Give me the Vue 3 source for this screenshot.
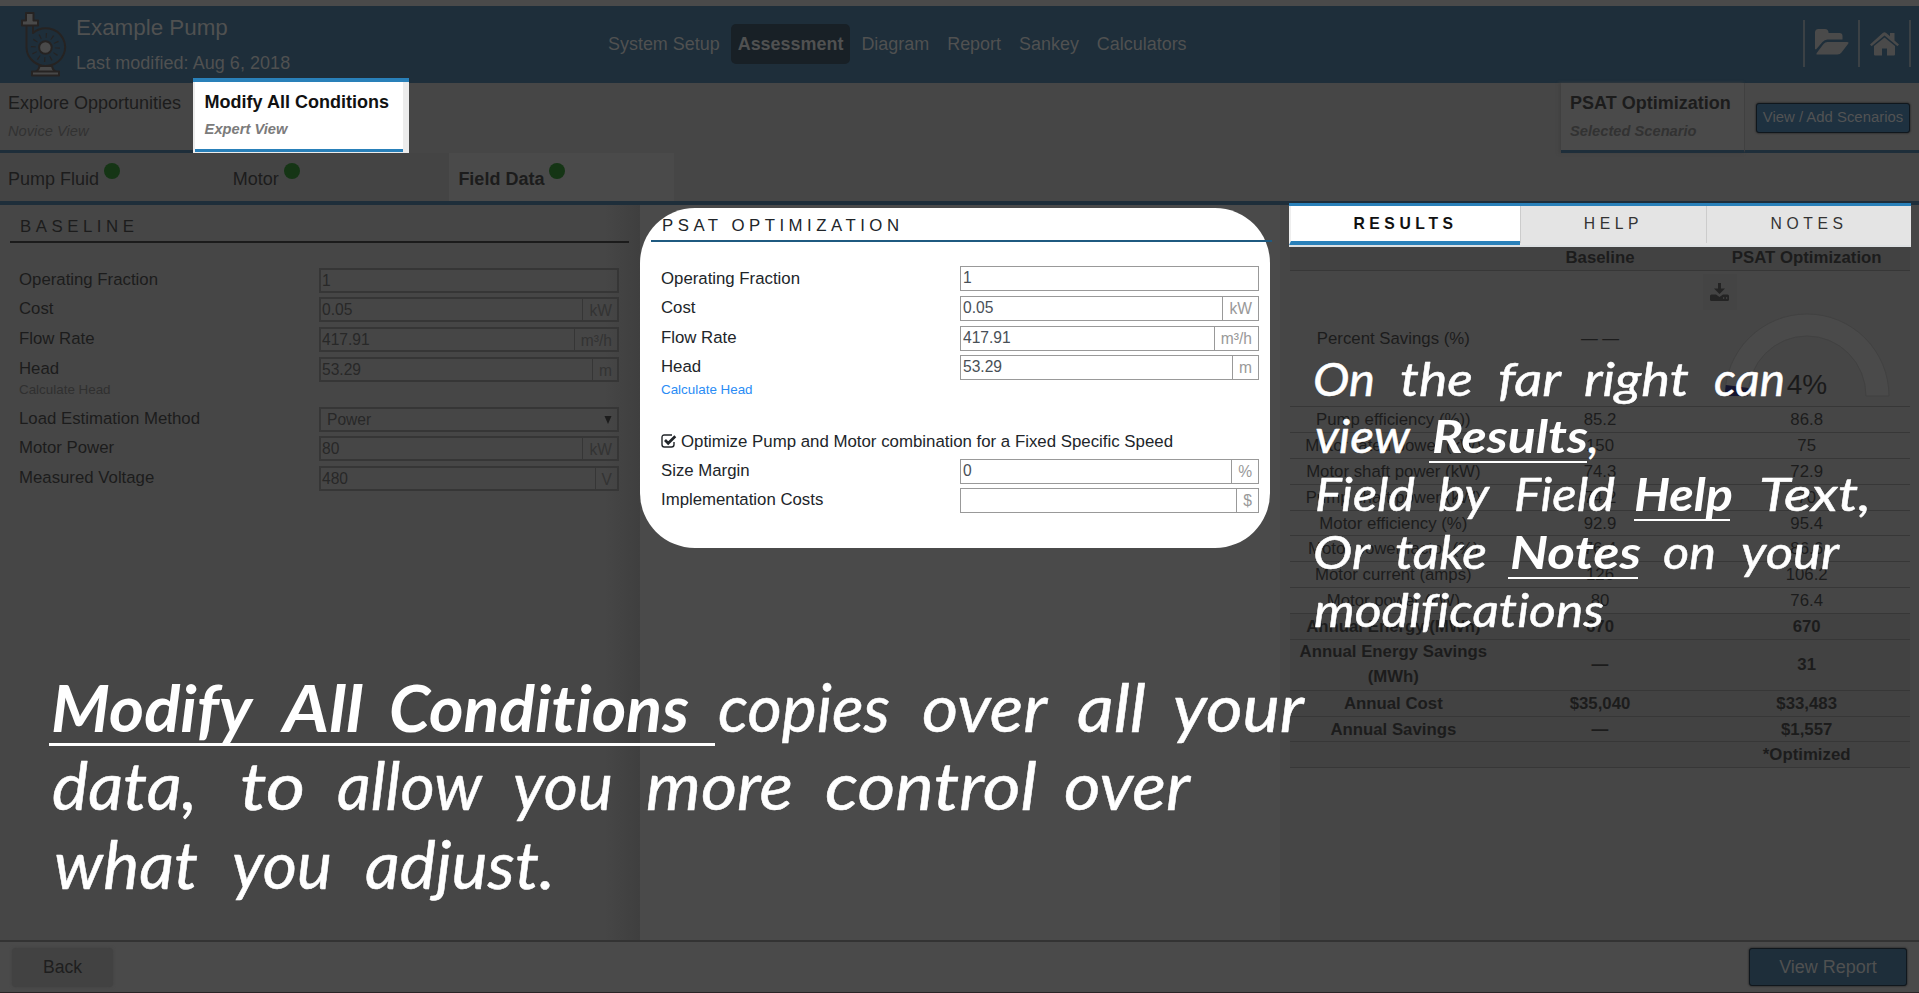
<script setup>
const nav = ['System Setup', 'Assessment', 'Diagram', 'Report', 'Sankey', 'Calculators']
const steps = ['Pump Fluid', 'Motor', 'Field Data']

const baseline = [
  { label: 'Operating Fraction', value: '1' },
  { label: 'Cost', value: '0.05', unit: 'kW' },
  { label: 'Flow Rate', value: '417.91', unit: 'm³/h' },
  { label: 'Head', value: '53.29', unit: 'm', link: 'Calculate Head' },
  { label: 'Load Estimation Method', value: 'Power', select: true },
  { label: 'Motor Power', value: '80', unit: 'kW' },
  { label: 'Measured Voltage', value: '480', unit: 'V' },
]
const modified = [
  { label: 'Operating Fraction', value: '1' },
  { label: 'Cost', value: '0.05', unit: 'kW' },
  { label: 'Flow Rate', value: '417.91', unit: 'm³/h' },
  { label: 'Head', value: '53.29', unit: 'm', link: 'Calculate Head' },
]
const extra = [
  { label: 'Size Margin', value: '0', unit: '%' },
  { label: 'Implementation Costs', value: '', unit: '$' },
]
const results = [
  ['Pump efficiency (%))', '85.2', '86.8'],
  ['Motor rated power (kW)', '150', '75'],
  ['Motor shaft power (kW)', '74.3', '72.9'],
  ['Pump shaft power (kW)', '74.2', '70'],
  ['Motor efficiency (%)', '92.9', '95.4'],
  ['Motor power factor (%)', '76.4', '86.6'],
  ['Motor current (amps)', '126', '106.2'],
  ['Motor power (kW)', '80', '76.4'],
]
const totals = [
  ['Annual Energy (MWh)', '670', '670'],
  ['Annual Energy Savings (MWh)', '—', '31'],
  ['Annual Cost', '$35,040', '$33,483'],
  ['Annual Savings', '—', '$1,557'],
  ['', '', '*Optimized'],
]

// Annotation words: text, start x, end x, baseline y, bold
const large = [
  ['Modify', 51, 252, 732, 1], ['All', 283, 363, 732, 1], ['Conditions', 389, 689, 732, 1],
  ['copies', 718, 890, 732], ['over', 922, 1047, 732], ['all', 1077, 1146, 732], ['your', 1173, 1304, 732],
  ['data,', 52, 197, 810], ['to', 240, 305, 810], ['allow', 337, 482, 810], ['you', 513, 613, 810],
  ['more', 646, 793, 810], ['control', 825, 1037, 810], ['over', 1064, 1190, 810],
  ['what', 54, 198, 889], ['you', 232, 332, 889], ['adjust.', 365, 555, 889],
]
const small = [
  ['On', 1313, 1375, 396], ['the', 1400, 1473, 396], ['far', 1498, 1561, 396], ['right', 1584, 1689, 396], ['can', 1714, 1785, 396],
  ['view', 1315, 1410, 453], ['Results', 1432, 1588, 453, 1], [',', 1588, 1599, 453],
  ['Field', 1315, 1415, 511], ['by', 1438, 1489, 511], ['Field', 1514, 1615, 511], ['Help', 1634, 1733, 511, 1], ['Text,', 1759, 1871, 511],
  ['Or', 1313, 1370, 569], ['take', 1395, 1487, 569], ['Notes', 1510, 1641, 569, 1], ['on', 1663, 1716, 569], ['your', 1741, 1839, 569],
  ['modifications', 1314, 1604, 627],
]
</script>

<template>
  <div class="page">
    <header class="top">
      <svg class="pump" width="48" height="68" viewBox="20 10 48 68">
        <g fill="none" stroke="#262322" stroke-width="2" stroke-linejoin="round">
          <path d="M26.500 25.500V47.500A19.300 18.800 0 1 0 33 33V25.500" />
          <circle cx="45.400" cy="47.500" r="12" stroke-width="5" stroke-dasharray="1.100 5.183" />
          <path d="M39.500 66Q39 70 35.500 72H56Q52.500 70 52 66Z" fill="#484848" />
          <rect x="32" y="71.500" width="27" height="4" fill="#484848" />
          <path d="M26 13H33.500V20.500H38V25.500H22V20.500H26Z" fill="#4a4a4a" />
          <circle cx="45.400" cy="47.500" r="6.300" fill="#4a4a4a" />
        </g>
      </svg>
      <div class="title">
        <div class="name">Example Pump</div>
        <div class="date">Last modified: Aug 6, 2018</div>
      </div>
      <nav>
        <span v-for="n in nav" :key="n" :class="{ on: n === 'Assessment' }">{{ n }}</span>
      </nav>
      <div class="tools">
        <span class="folder">
          <svg width="34" height="26" viewBox="0 0 34 26"><path fill="#4a4a4a" d="M0 20V3.500Q0 0 3.500 0H10Q13 0 13.500 3V4H24.500Q27.500 4 27.500 7V10.500H12.500Q9.500 10.500 7.500 13L1 20.500ZM2 25.500Q1 25.500 1.700 24L8.500 15Q10 13 12.500 13H32Q34.500 13 33 15L26.500 23.500Q25 25.500 22.500 25.500Z" /></svg>
        </span>
        <span class="home">
          <svg width="29" height="24" viewBox="0 0 29 24"><path fill="#4a4a4a" d="M0 12.500L13 .8Q14.500-.4 16 .8L20 4.300V1H24.500V8.500L29 12.500L27.500 14.300L14.500 3.500L1.500 14.300ZM4 14L14.500 5.500L25 14V22.500Q25 23.500 24 23.500H17V16.500H12V23.500H5Q4 23.500 4 22.500Z" /></svg>
        </span>
      </div>
    </header>

    <div class="views">
      <div class="view explore"><b>Explore Opportunities</b><i>Novice View</i></div>
      <div class="lit">
        <div class="view modify"><b>Modify All Conditions</b><i>Expert View</i></div>
      </div>
      <div class="fill"></div>
      <div class="view scenario"><b>PSAT Optimization</b><i>Selected Scenario</i></div>
      <div class="scenarios"><button>View / Add Scenarios</button></div>
    </div>

    <div class="steps">
      <div v-for="s in steps" :key="s" class="step" :class="{ on: s === 'Field Data' }">{{ s }}<span class="dot"></span></div>
    </div>

    <main>
      <section class="panel left">
        <h2>BASELINE</h2>
        <div class="form">
          <template v-for="f in baseline" :key="f.label">
            <div class="row">
              <label>{{ f.label }}</label>
              <div class="field" :class="{ select: f.select }">
                <span class="value">{{ f.value }}</span>
                <span v-if="f.unit" class="unit">{{ f.unit }}</span>
                <svg v-if="f.select" width="8" height="8" viewBox="0 0 8 8"><path d="M.5 0H7.500L4 8Z" fill="#1c1c1c" /></svg>
              </div>
            </div>
            <div v-if="f.link" class="link">{{ f.link }}</div>
          </template>
        </div>
      </section>

      <section class="panel middle">
        <div class="spot">
          <h2>PSAT OPTIMIZATION</h2>
          <div class="form">
            <template v-for="f in modified" :key="f.label">
              <div class="row">
                <label>{{ f.label }}</label>
                <div class="field"><span class="value">{{ f.value }}</span><span v-if="f.unit" class="unit">{{ f.unit }}</span></div>
              </div>
              <div v-if="f.link" class="link">{{ f.link }}</div>
            </template>
            <div class="check">
              <svg width="16" height="14" viewBox="0 0 16 14"><path d="M13 8V10.500Q13 13 10.500 13H3.300Q1 13 1 10.500V3.500Q1 1 3.300 1H11" fill="none" stroke="#212529" stroke-width="1.400" /><path d="M4 6L7.200 9.300L14.300 2.300" fill="none" stroke="#212529" stroke-width="2.700" /></svg>
              <span>Optimize Pump and Motor combination for a Fixed Specific Speed</span>
            </div>
            <div v-for="f in extra" :key="f.label" class="row">
              <label>{{ f.label }}</label>
              <div class="field"><span class="value">{{ f.value }}</span><span class="unit">{{ f.unit }}</span></div>
            </div>
          </div>
        </div>
      </section>

      <section class="panel right">
        <div class="tabs">
          <div class="tab results">RESULTS</div>
          <div class="tab help">HELP</div>
          <div class="tab notes">NOTES</div>
        </div>
        <div class="tr head"><span></span><span>Baseline</span><span>PSAT Optimization</span></div>
        <div class="tr savings">
          <span>Percent Savings (%)</span>
          <span>— —</span>
          <div class="gauge">
            <div class="dl">
              <svg width="19" height="18" viewBox="0 0 19 18"><path fill="#242424" d="M8 0H11V5.500H15L9.500 11L4 5.500H8ZM0 13Q0 11.500 1.500 11.500H6L9.500 14L13 11.500H17.500Q19 11.500 19 13V16.500Q19 18 17.500 18H1.500Q0 18 0 16.500Z" /><path d="M13 15H14.300M16 15H17.300" stroke="#464646" stroke-width="1.300" /></svg>
            </div>
            <svg class="arc" width="166" height="85" viewBox="0 0 166 85">
              <path d="M1 84A82 82 0 0 1 165 84H142A59 60 0 0 0 24 84Z" fill="#4a4a4a" stroke="#414141" />
              <path d="M1 84Q1 78 1.800 73L24.500 76Q24 80 24 84Z" fill="#15152e" />
              <text x="83" y="82" text-anchor="middle" font-size="28" fill="#1a1a1a">4%</text>
            </svg>
          </div>
        </div>
        <div v-for="r in results" :key="r[0]" class="tr"><span v-for="(c, i) in r" :key="i">{{ c }}</span></div>
        <div v-for="r in totals" :key="r[0]" class="tr total"><span v-for="(c, i) in r" :key="i">{{ c }}</span></div>
      </section>
    </main>

    <footer>
      <button class="back">Back</button>
      <button class="report">View Report</button>
    </footer>

    <svg class="notes-layer" width="1919" height="993" viewBox="0 0 1919 993">
      <g font-size="65">
        <text v-for="(w, i) in large" :key="i" :x="w[1]" :y="w[3]" :textLength="w[2] - w[1]" lengthAdjust="spacingAndGlyphs" :class="{ strong: w[4] }">{{ w[0] }}</text>
      </g>
      <g font-size="46">
        <text v-for="(w, i) in small" :key="i" :x="w[1]" :y="w[3]" :textLength="w[2] - w[1]" lengthAdjust="spacingAndGlyphs" :class="{ strong: w[4] }">{{ w[0] }}</text>
      </g>
      <rect x="49" y="743" width="666" height="3" />
      <rect x="1429" y="461" width="158" height="2" />
      <rect x="1634" y="519" width="96" height="2" />
      <rect x="1508" y="577" width="130" height="2" />
    </svg>
  </div>
</template>

<style>
body { margin: 0; background: #464646; overflow: hidden; }
</style>

<style scoped>
.page { position: relative; width: 1919px; height: 993px; overflow: hidden; background: #464646; color: #1c1c1c; font: 18px/1 "Liberation Sans", Arial, sans-serif; display: flex; flex-direction: column; }
.page * { box-sizing: border-box; }
button { font-family: inherit; padding: 0; }

.top { height: 83px; flex: none; border-top: 6px solid #4a4a4a; background: #1e2e3a; display: flex; color: #505151; }
.pump { margin: 4px 0 0 20px; flex: none; }
.title { margin-left: 8px; width: 525px; white-space: nowrap; }
.name { font-size: 22.4px; line-height: 26px; margin-top: 9px; }
.date { font-size: 18px; line-height: 20px; margin-top: 12px; letter-spacing: .04px; }
nav { display: flex; gap: 4px; margin-top: 18px; height: 40px; line-height: 41px; font-size: 17.95px; }
nav span { padding: 0 7px; border-radius: 5px; }
nav .on { font-weight: bold; background: #182026; }
.tools { margin: 14px 8px 0 auto; height: 47px; display: flex; border-right: 2px solid #3b4145; }
.tools span { display: flex; align-items: center; justify-content: center; border-left: 2px solid #3b4145; }
.folder { width: 55px; padding-bottom: 3px; }
.home { width: 51px; }

.views { height: 70px; flex: none; display: flex; }
.view { display: flex; flex-direction: column; white-space: nowrap; }
.view b { font-size: 18px; line-height: 20px; }
.view i { font-size: 14.7px; line-height: 18px; margin-top: 9px; color: #323232; }
.explore { width: 193px; padding: 10px 0 0 8px; border-bottom: 3px solid #1e2e3a; }
.explore b { font-weight: normal; }
.lit { width: 216px; height: 75px; margin-top: -5px; background: #ececec; border-top: 4px solid #2980b9; z-index: 1; }
.modify { margin-left: 2px; width: 208px; height: 70px; background: #fff; border-bottom: 3px solid #2980b9; padding: 10px 0 0 9.6px; color: #111; }
.modify i { color: #7b7b7b; font-weight: bold; margin-top: 8px; }
.fill { flex: 1; }
.scenario { width: 184px; background: #4a4a4a; border-bottom: 3px solid #1e2e3a; border-right: 1px solid #404040; padding: 10px 0 0 9px; box-shadow: -2px 0 3px #404040; }
.scenario i { font-weight: bold; }
.scenarios { width: 174px; background: #484848; border-bottom: 3px solid #1e2e3a; padding: 20px 0 0 11px; }
.scenarios button { width: 154px; height: 30px; border: 1px solid #10171d; border-radius: 3px; background: #1e3140; color: #525354; font-size: 14.9px; box-shadow: 0 0 2px #111; white-space: nowrap; padding-bottom: 2px; }

.steps { height: 52px; flex: none; border-bottom: 4px solid #1e2e3a; display: flex; }
.step { width: 224.7px; padding: 13px 0 0 8px; line-height: 26px; font-size: 18px; display: flex; gap: 5px; background: #444; height: 48px; }
.step.on { background: #4a4a4a; font-weight: bold; padding-left: 9px; }
.dot { width: 16px; height: 16px; border-radius: 50%; background: #153515; margin-top: -3px; }

main { flex: 1; display: flex; min-height: 0; }
.left { width: 640px; padding: 0 11px 0 10px; background: linear-gradient(90deg, transparent 605px, #3f3f3f 640px); }
h2 { margin: 0; font-weight: normal; font-size: 16.8px; line-height: 20px; letter-spacing: 4.55px; height: 38px; padding: 12px 0 0 10px; border-bottom: 2px solid #1b1b1b; }
.left .form { padding: 24.5px 10px 0 9px; }
.row { display: flex; height: 25px; margin-bottom: 4.8px; justify-content: space-between; }
.row label { font-size: 16.8px; line-height: 24px; }
.field { width: 300px; height: 25px; border: 2px solid #363636; display: flex; font-size: 15.6px; line-height: 21px; color: #282828; }
.value { flex: 1; padding-left: 1px; }
.select .value { padding-left: 6px; }
.select svg { margin: 7px 5px 0 0; }
.unit { border-left: 1px solid #363636; padding: 1px 5px 0 6px; color: #333; }
.link { font-size: 13.4px; line-height: 16px; height: 20px; margin-top: -4.500px; margin-bottom: 4.500px; color: #303030; }

.middle { width: 640px; background: #4a4a4a; padding-top: 3px; }
.spot { width: 630px; height: 340px; border-radius: 55px; background: #fff; color: #212529; }
.spot h2 { height: 34px; margin: 0 0 0 11px; width: 621px; padding: 8px 0 0 11px; letter-spacing: 4.5px; border-color: #1f5a80; }
.spot .form { padding: 24.4px 11px 0 21px; }
.spot .row { margin-bottom: 4.600px; }
.spot .field { width: 299px; border: 1.5px solid #999; color: #495057; line-height: 22px; }
.spot .value { padding-left: 2px; }
.spot .row label { line-height: 24px; }
.spot .row:first-child label { line-height: 25px; }
.spot .unit { border-color: #999; color: #999; padding: 1px 6px 0; }
.spot .link { color: #2a8cf5; margin-top: -3px; margin-bottom: 3px; }
.check { display: flex; align-items: center; gap: 4px; height: 25px; margin: 28px 0 4px; font-size: 16.84px; white-space: nowrap; }
.check svg { margin-top: -3px; }

.right { width: 639px; padding: 0 9px 0 10px; }
.tabs { margin: -2px -1px 0 -1px; width: 622px; height: 44px; background: #e4e4e4; border-top: 3px solid #2980b9; border-bottom: 2px solid #dde0e2; display: flex; position: relative; z-index: 1; font-size: 15.7px; letter-spacing: 4.6px; color: #333; }
.tab { text-align: center; line-height: 36px; height: 37px; }
.results { width: 231px; height: 39px; background: #fff; border-bottom: 4px solid #2980b9; border-left: 2px solid #eee; font-weight: bold; color: #111; }
.help { width: 187px; border-left: 1px solid #ccc; border-right: 1px solid #ccc; }
.notes { flex: 1; }
.tr { display: grid; grid-template-columns: repeat(3, 1fr); align-items: center; text-align: center; width: 620px; height: 25.9px; border-bottom: 1px solid #373737; font-size: 16.8px; line-height: 26px; }
.head { height: 24px; background: #424242; font-weight: bold; line-height: 21px; padding-bottom: 5px; align-items: end; }
.savings { height: 136px; padding-top: 1px; }
.gauge { align-self: stretch; padding-top: 2px; height: 134px; }
.dl { width: 34px; height: 36px; background: #444; display: flex; align-items: center; justify-content: center; padding: 0 1px 1px 0; }
.arc { display: block; margin: 2px 0 0 21px; overflow: visible; }
.total { background: #424242; font-weight: bold; height: 25.7px; }
.total:nth-last-child(4) { height: 51px; line-height: 24.5px; }

footer { height: 53px; flex: none; border-top: 2px solid #333; border-bottom: 1px solid #2a2426; background: #4a4a4a; display: flex; justify-content: space-between; padding: 6px 12px 0; }
.back { width: 101px; height: 39px; border: 0; border-radius: 4px; background: #424242; color: #1e1e1e; font-size: 17.6px; box-shadow: 0 0 3px #424242; }
.report { width: 158px; height: 38px; border: 1px solid #10171d; border-radius: 3px; background: #1e2e3a; color: #505151; font-size: 18px; box-shadow: 0 0 2px #111; }

.notes-layer { position: absolute; inset: 0; z-index: 3; fill: #fff; pointer-events: none; font-family: Lato, sans-serif; font-style: italic; font-variant-ligatures: none; }
.notes-layer text { stroke: #fff; stroke-width: .5px; stroke-linejoin: round; }
.notes-layer .strong { font-weight: bold; stroke: none; }
</style>
